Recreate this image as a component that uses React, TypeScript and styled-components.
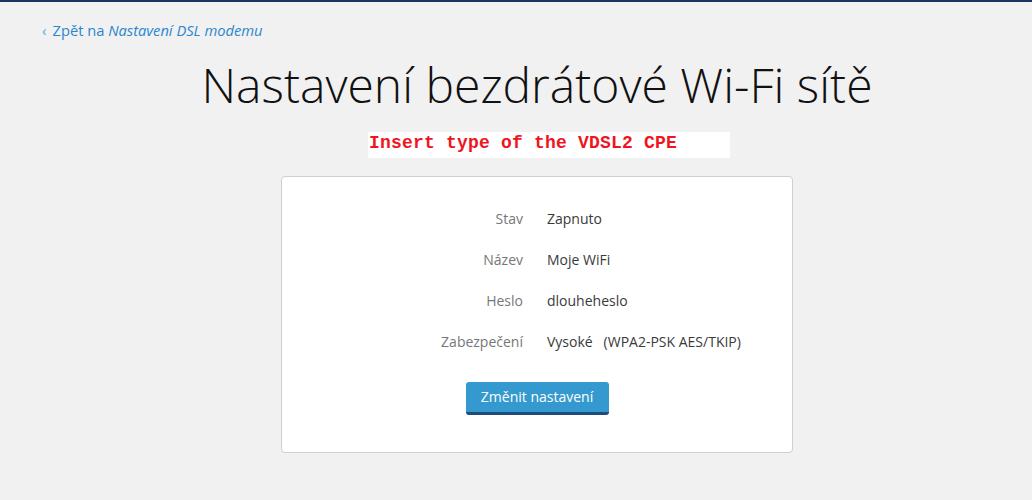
import styled, { createGlobalStyle } from "styled-components";

const GlobalStyle = createGlobalStyle`
  html, body {
    margin: 0;
    padding: 0;
    background: #f1f1f1;
  }
  body {
    font-family: "Open Sans", "Liberation Sans", sans-serif;
    color: #333;
  }
`;

const Page = styled.div`
  min-height: 500px;
  border-top: 2px solid #1b3560;
  box-sizing: border-box;
  padding: 17px 0 0 42px;
`;

const BackLink = styled.a`
  display: inline-flex;
  align-items: center;
  gap: 5px;
  font-size: 14.7px;
  color: #2a86cf;
  text-decoration: none;
  line-height: 20px;

  em {
    font-style: italic;
  }
`;

const Chevron = styled.span`
  font-size: 15px;
  color: #5ea6dc;
  margin-right: 1px;
`;

const Content = styled.div`
  display: flex;
  flex-direction: column;
  align-items: center;
`;

const Title = styled.h1`
  margin: 10px 0 0;
  font-weight: 300;
  font-size: 48px;
  line-height: 68px;
  color: #111;
`;

const Note = styled.div`
  margin-top: 13px;
  margin-left: 24px;
  width: 362px;
  height: 26px;
  background: #fff;
  box-sizing: border-box;
  padding: 1px 0 0 1px;
  font-family: "Liberation Mono", "DejaVu Sans Mono", monospace;
  font-weight: bold;
  font-size: 18px;
  line-height: 20px;
  letter-spacing: 0.2px;
  color: #f0141e;
`;

const Card = styled.div`
  margin-top: 18px;
  width: 512px;
  box-sizing: border-box;
  background: #fff;
  border: 1px solid #cfcfcf;
  border-radius: 4px;
  padding: 32px 0 37px;
  display: flex;
  flex-direction: column;
  align-items: center;
`;

const Rows = styled.dl`
  align-self: stretch;
  display: grid;
  grid-template-columns: 241px 1fr;
  column-gap: 24px;
  row-gap: 21px;
  margin: 0;
  font-size: 14px;
  line-height: 20px;
`;

const Label = styled.dt`
  text-align: right;
  color: #777;
`;

const Value = styled.dd`
  margin: 0;
  color: #3a3a3a;
  white-space: pre;
`;

const Button = styled.button`
  margin-top: 30px;
  width: 143px;
  height: 33px;
  border: none;
  border-bottom: 3px solid #1e4d7b;
  border-radius: 3px;
  background: #3399cf;
  color: #fff;
  font-family: "Open Sans", "Liberation Sans", sans-serif;
  font-size: 14px;
  padding: 0 0 1px;
  cursor: pointer;
`;

const rows = [
  { label: "Stav", value: "Zapnuto" },
  { label: "Název", value: "Moje WiFi" },
  { label: "Heslo", value: "dlouheheslo" },
  { label: "Zabezpečení", value: "Vysoké   (WPA2-PSK AES/TKIP)" },
];

export default function App() {
  return (
    <>
      <GlobalStyle />
      <Page>
        <BackLink href="#">
          <Chevron>‹</Chevron>
          <span>
            Zpět na <em>Nastavení DSL modemu</em>
          </span>
        </BackLink>
        <Content>
          <Title>Nastavení bezdrátové Wi-Fi sítě</Title>
          <Note>Insert type of the VDSL2 CPE</Note>
          <Card>
            <Rows>
              {rows.map((r) => (
                <>
                  <Label key={r.label + "l"}>{r.label}</Label>
                  <Value key={r.label + "v"}>{r.value}</Value>
                </>
              ))}
            </Rows>
            <Button>Změnit nastavení</Button>
          </Card>
        </Content>
      </Page>
    </>
  );
}
